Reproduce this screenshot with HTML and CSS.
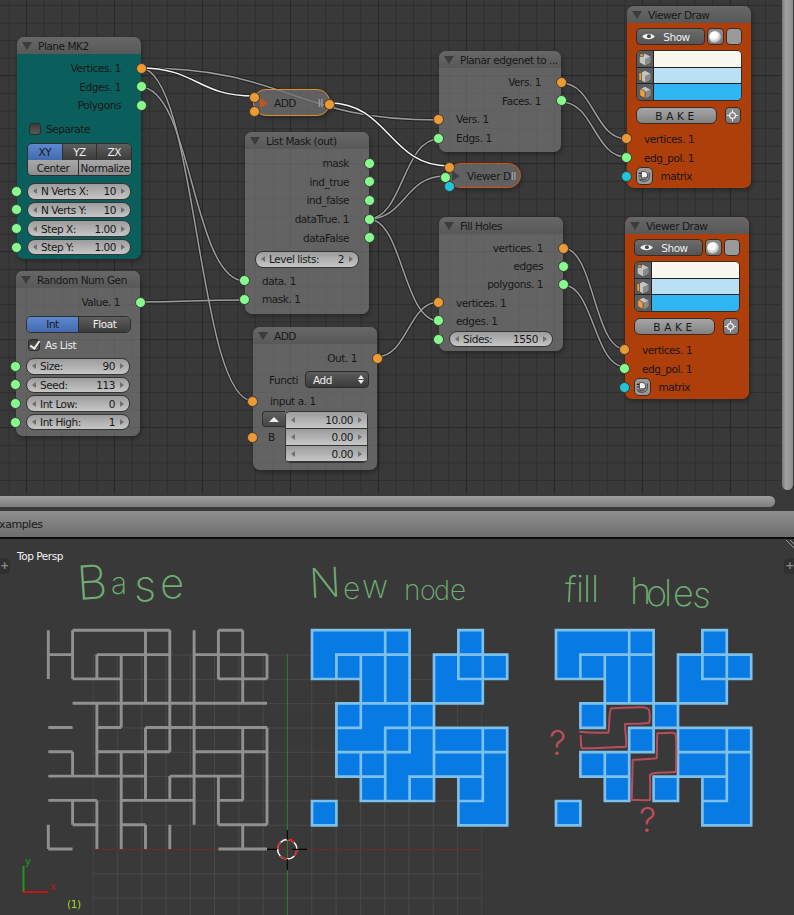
FILE: index.html
```html
<!DOCTYPE html>
<html lang="en">
<head>
    <meta charset="UTF-8">
    <title>Sverchok node tree</title>
    <link rel="stylesheet" href="styles.css">
</head>
<body>

    <svg class="defs" width="0" height="0">
        <symbol id="cube1" viewBox="0 0 16 16">
            <path d="M8 2 14 5V12L8 15 2 12V5Z" fill="#c4c4c4"/>
            <path d="M8 8 14 5V12L8 15Z" fill="#8a8a8a"/>
            <path d="M2 2H6V5H2Z" fill="#f0a040" stroke="#222" stroke-width=".6"/>
        </symbol>
        <symbol id="cube2" viewBox="0 0 16 16">
            <path d="M8 2 14 5V12L8 15 2 12V5Z" fill="#c4c4c4"/>
            <path d="M8 8 14 5V12L8 15Z" fill="#8a8a8a"/>
            <path d="M1 4H4V13H1Z" fill="#f0a040" stroke="#222" stroke-width=".6"/>
        </symbol>
        <symbol id="cube3" viewBox="0 0 16 16">
            <path d="M8 2 14 5V12L8 15 2 12V5Z" fill="#c4c4c4"/>
            <path d="M8 8 14 5V12L8 15Z" fill="#8a8a8a"/>
            <path d="M2 4 8 7V15L2 12Z" fill="#f0a040" stroke="#222" stroke-width=".6"/>
        </symbol>
        <symbol id="plug" viewBox="0 0 16 16">
            <path d="M3 13C8 15 14 14 14 9V4" fill="none" stroke="#333" stroke-width="1"/>
            <path d="M2 11C7 13 12 12 12 8" fill="none" stroke="#333" stroke-width="1"/>
            <path d="M5 3H9C11 3 12 5 12 7S11 10 9 10H5Z" fill="#f2f2f2" stroke="#222" stroke-width=".8"/>
            <path d="M2 5H5M2 8H5" stroke="#222" stroke-width="1.2"/>
        </symbol>
        <symbol id="eye" viewBox="0 0 16 10">
            <path d="M1 5C4 1 12 1 15 5 12 9 4 9 1 5Z" fill="#f0f0f0"/>
            <circle cx="8.5" cy="4.6" r="2.2" fill="#444"/>
        </symbol>
        <symbol id="target" viewBox="0 0 16 16">
            <circle cx="8" cy="8" r="3.6" fill="none" stroke="#eee" stroke-width="1.6"/>
            <path d="M8 1V4M8 12V15M1 8H4M12 8H15" stroke="#eee" stroke-width="1.4"/>
        </symbol>
    </svg>

    <div class="editor">
        <div class="grid">

            <svg class="wires" width="781" height="494">
                <defs>
                    <g id="links">
                        <path d="M140 68C290 68 290 120 439 120"/>
                        <path d="M140 68C197 68 197 401 253 401"/>
                        <path d="M140 87C192 87 192 281 245 281"/>
                        <path d="M139 302C190 302 190 300 245 300"/>
                        <path d="M368 219C403 219 403 139 439 139"/>
                        <path d="M368 219C405 219 405 176 445 176"/>
                        <path d="M368 219C403 219 403 321 439 321"/>
                        <path d="M376 357C408 357 408 302 439 302"/>
                        <path d="M561 83C594 83 594 139 627 139"/>
                        <path d="M561 102C594 102 594 157 627 157"/>
                        <path d="M563 248C594 248 594 349 625 349"/>
                        <path d="M563 285C594 285 594 367 625 367"/>
                    </g>
                    <g id="active">
                        <path d="M140 68C197 68 197 96 254 96"/>
                        <path d="M329 103C389 103 389 166 449 166"/>
                    </g>
                </defs>
                <use href="#links" class="wire-back"/>
                <use href="#links" class="wire-line"/>
                <use href="#active" class="wire-back"/>
                <use href="#active" class="wire-on"/>
            </svg>

            <div class="node plane">
                <div class="node-head"><i class="fold"></i>Plane MK2</div>
                <div class="row out">Vertices. 1<i class="sock out orange"></i></div>
                <div class="row out">Edges. 1<i class="sock out green"></i></div>
                <div class="row out">Polygons<i class="sock out green"></i></div>
                <div class="row check-row mt5"><i class="check"></i>Separate</div>
                <div class="btn-group mt5">
                    <div class="btn-line">
                        <span class="btn blue">XY</span><span class="btn dark">YZ</span><span class="btn dark">ZX</span>
                    </div>
                    <div class="btn-line">
                        <span class="btn grey wide">Center</span><span class="btn grey wider">Normalize</span>
                    </div>
                </div>
                <div class="row field-row mt6"><i class="sock in green"></i><div class="field"><span>N Verts X:</span><b>10</b></div></div>
                <div class="row field-row"><i class="sock in green"></i><div class="field"><span>N Verts Y:</span><b>10</b></div></div>
                <div class="row field-row"><i class="sock in green"></i><div class="field"><span>Step X:</span><b>1.00</b></div></div>
                <div class="row field-row"><i class="sock in green"></i><div class="field"><span>Step Y:</span><b>1.00</b></div></div>
            </div>

            <div class="node random">
                <div class="node-head"><i class="fold"></i>Random Num Gen</div>
                <div class="row out">Value. 1<i class="sock out green"></i></div>
                <div class="btn-group mt4">
                    <div class="btn-line">
                        <span class="btn blue half">Int</span><span class="btn dark half">Float</span>
                    </div>
                </div>
                <div class="row check-row mt3"><i class="check on"></i><span class="light">As List</span></div>
                <div class="row field-row mt2"><i class="sock in green"></i><div class="field"><span>Size:</span><b>90</b></div></div>
                <div class="row field-row"><i class="sock in green"></i><div class="field"><span>Seed:</span><b>113</b></div></div>
                <div class="row field-row"><i class="sock in green"></i><div class="field"><span>Int Low:</span><b>0</b></div></div>
                <div class="row field-row"><i class="sock in green"></i><div class="field"><span>Int High:</span><b>1</b></div></div>
            </div>

            <div class="node mask">
                <div class="node-head"><i class="fold"></i>List Mask (out)</div>
                <div class="row out">mask<i class="sock out green"></i></div>
                <div class="row out">ind_true<i class="sock out green"></i></div>
                <div class="row out">ind_false<i class="sock out green"></i></div>
                <div class="row out">dataTrue. 1<i class="sock out green"></i></div>
                <div class="row out">dataFalse<i class="sock out green"></i></div>
                <div class="row field-row mt3"><div class="field"><span>Level lists:</span><b>2</b></div></div>
                <div class="row mt3"><i class="sock in green"></i>data. 1</div>
                <div class="row"><i class="sock in green"></i>mask. 1</div>
            </div>

            <div class="node planar">
                <div class="node-head"><i class="fold"></i>Planar edgenet to ...</div>
                <div class="row out">Vers. 1<i class="sock out orange"></i></div>
                <div class="row out">Faces. 1<i class="sock out green"></i></div>
                <div class="row"><i class="sock in orange"></i>Vers. 1</div>
                <div class="row"><i class="sock in green"></i>Edgs. 1</div>
            </div>

            <div class="node holes tight">
                <div class="node-head"><i class="fold"></i>Fill Holes</div>
                <div class="row out">vertices. 1<i class="sock out orange"></i></div>
                <div class="row out">edges<i class="sock out green"></i></div>
                <div class="row out">polygons. 1<i class="sock out green"></i></div>
                <div class="row"><i class="sock in orange"></i>vertices. 1</div>
                <div class="row"><i class="sock in green"></i>edges. 1</div>
                <div class="row field-row"><i class="sock in green"></i><div class="field"><span>Sides:</span><b>1550</b></div></div>
            </div>

            <div class="node add">
                <div class="node-head"><i class="fold"></i>ADD</div>
                <div class="row out">Out. 1<i class="sock out orange"></i></div>
                <div class="row func mt3">
                    <span>Functi</span>
                    <div class="select">Add<i class="updown"></i></div>
                </div>
                <div class="row mt3"><i class="sock in orange"></i>input a. 1</div>
                <div class="vec">
                    <div class="vec-side">
                        <span class="vec-up"><i></i></span>
                        <span class="vec-b"><i class="sock in orange"></i>B</span>
                    </div>
                    <div class="vec-fields">
                        <div class="field flat"><b>10.00</b></div>
                        <div class="field flat"><b>0.00</b></div>
                        <div class="field flat"><b>0.00</b></div>
                    </div>
                </div>
            </div>

            <div class="node draw draw-a">
                <div class="node-head"><i class="fold"></i>Viewer Draw</div>
                <div class="show-line">
                    <span class="show"><svg class="eye" width="15" height="9"><use href="#eye"/></svg>Show</span>
                    <span class="icon-btn"><i class="sphere"></i></span>
                    <span class="icon-btn plain"></span>
                </div>
                <div class="swatches">
                    <div class="swatch"><span class="swatch-icon"><svg width="14" height="14"><use href="#cube1"/></svg></span><i class="white"></i></div>
                    <div class="swatch"><span class="swatch-icon"><svg width="14" height="14"><use href="#cube2"/></svg></span><i class="pale"></i></div>
                    <div class="swatch"><span class="swatch-icon"><svg width="14" height="14"><use href="#cube3"/></svg></span><i class="sky"></i></div>
                </div>
                <div class="bake-line">
                    <span class="bake">BAKE</span>
                    <span class="icon-btn"><svg width="13" height="13"><use href="#target"/></svg></span>
                </div>
                <div class="row mt6"><i class="sock in orange"></i>vertices. 1</div>
                <div class="row"><i class="sock in green"></i>edg_pol. 1</div>
                <div class="row matrix"><i class="sock in teal"></i><span class="plug"><svg width="14" height="14"><use href="#plug"/></svg></span>matrix</div>
            </div>

            <div class="node draw draw-b">
                <div class="node-head"><i class="fold"></i>Viewer Draw</div>
                <div class="show-line">
                    <span class="show"><svg class="eye" width="15" height="9"><use href="#eye"/></svg>Show</span>
                    <span class="icon-btn"><i class="sphere"></i></span>
                    <span class="icon-btn plain"></span>
                </div>
                <div class="swatches">
                    <div class="swatch"><span class="swatch-icon"><svg width="14" height="14"><use href="#cube1"/></svg></span><i class="white"></i></div>
                    <div class="swatch"><span class="swatch-icon"><svg width="14" height="14"><use href="#cube2"/></svg></span><i class="pale"></i></div>
                    <div class="swatch"><span class="swatch-icon"><svg width="14" height="14"><use href="#cube3"/></svg></span><i class="sky"></i></div>
                </div>
                <div class="bake-line">
                    <span class="bake">BAKE</span>
                    <span class="icon-btn"><svg width="13" height="13"><use href="#target"/></svg></span>
                </div>
                <div class="row mt6"><i class="sock in orange"></i>vertices. 1</div>
                <div class="row"><i class="sock in green"></i>edg_pol. 1</div>
                <div class="row matrix"><i class="sock in teal"></i><span class="plug"><svg width="14" height="14"><use href="#plug"/></svg></span>matrix</div>
            </div>

            <!-- collapsed nodes -->
            <div class="pill pill-add">
                <i class="sock orange s1"></i><i class="sock orange s2"></i><i class="sock orange s3"></i>
                <i class="play"></i><span>ADD</span><em>II</em>
            </div>
            <div class="pill pill-viewer">
                <i class="sock orange s1"></i><i class="sock green s2"></i><i class="sock teal s3"></i>
                <i class="play"></i><span>Viewer D</span><em>II</em>
            </div>
        </div>
        <div class="vscroll"></div>
        <div class="hscroll"></div>
    </div>

    <div class="area-head"><span>examples</span></div>

    <div class="viewport">
        <i class="tab tab-l">+</i>
        <i class="tab tab-r">+</i>
        <svg class="view" width="794" height="376" viewBox="0 539 794 376">
            <defs>
                <pattern id="floor" x="92.6" y="654.6" width="24.3" height="24.3" patternUnits="userSpaceOnUse">
                    <path d="M0 0V24.3M0 0H24.3" stroke="#484848" stroke-width="2" fill="none"/>
                </pattern>
            </defs>
            <rect x="92.6" y="654" width="389.5" height="261" fill="url(#floor)"/>
            <path d="M93 849.3H482" stroke="#6c2a2a" stroke-width="1"/>
            <path d="M287.3 654V915" stroke="#2f7f2f" stroke-width="1"/>

            <g class="hatch">
                <path d="M786 540 794 548M790 540 794 544"/>
            </g>

            <text class="view-label" x="17" y="560">Top Persp</text>

            <!-- handwritten notes -->
            <text class="note">
                <tspan x="78" y="600" font-size="47" rotate="-4">B</tspan>
                <tspan x="111" y="594" font-size="30">a</tspan>
                <tspan x="134" y="601" font-size="44">s</tspan>
                <tspan x="160" y="598" font-size="42">e</tspan>
            </text>
            <text class="note">
                <tspan x="310" y="598" font-size="41" rotate="-3">N</tspan>
                <tspan x="343" y="599" font-size="30">e</tspan>
                <tspan x="362" y="598" font-size="32">w</tspan>
                <tspan x="404" y="600" font-size="28">n</tspan>
                <tspan x="420" y="600" font-size="27">o</tspan>
                <tspan x="434" y="600" font-size="27">d</tspan>
                <tspan x="450" y="600" font-size="28">e</tspan>
            </text>
            <text class="note" font-size="36" x="564 576 583 591 630 646 664 673 692" y="602 602 602 602 604 606 606 606 607" rotate="3 0 0 0 0 0 0 0 4">fillholes</text>

            <!-- base grid, free edges included -->
            <path class="base" transform="translate(48.3 630.3) scale(24.3)" d="M1 0H5M7 0H8M0 1H1M2 1H5M6 1H9M1 2H3M7 2H9M1 3H9M0 4H1M2 4H3M4 4H9M0 5H1M2 5H5M6 5H9M0 6H4M5 6H8M0 7H2M3 7H6M7 7H8M1 8H2M3 8H4M7 8H9M0 9H1M7 9H9M0 0V2M0 8V9M1 0V2M1 5V6M1 7V8M2 1V2M2 3V6M2 7V9M3 1V4M3 5V9M4 0V3M4 4V7M4 8V9M5 0V5M5 6V7M5 8V9M6 0V8M7 0V2M7 6V8M8 0V3M8 4V7M8 8V9M9 1V2M9 4V8"/>

            <!-- planar faces -->
            <g transform="translate(312 630.2) scale(24.4)">
                <path class="face" d="M0 0H4V1H0ZM6 0H7V1H6ZM0 1H4V2H0ZM5 1H8V2H5ZM2 2H4V3H2ZM5 2H7V3H5ZM1 3H5V4H1ZM1 4H8V5H1ZM1 5H8V6H1ZM2 6H5V7H2ZM6 6H8V7H6ZM0 7H1V8H0ZM6 7H8V8H6Z"/>
                <path class="edge" d="M0 0H4M6 0H7M1 1H4M5 1H8M0 2H2M6 2H8M1 3H7M1 4H2M3 4H8M1 5H4M5 5H8M1 6H3M4 6H7M2 7H5M6 7H7M0 7H1M0 8H1M6 8H8M0 0V2M0 7V8M1 1V2M1 3V6M1 7V8M2 1V4M2 5V7M3 0V3M3 4V7M4 0V5M4 6V7M5 1V7M6 0V2M6 6V8M7 0V3M7 4V7M8 1V2M8 4V8"/>
            </g>

            <!-- filled holes -->
            <g transform="translate(556 630.2) scale(24.4)">
                <path class="face" d="M0 0H4V1H0ZM6 0H7V1H6ZM0 1H4V2H0ZM5 1H8V2H5ZM2 2H4V3H2ZM5 2H7V3H5ZM1 3H2V4H1ZM4 3H5V4H4ZM3 4H4V5H3ZM5 4H8V5H5ZM1 5H3V6H1ZM5 5H8V6H5ZM2 6H3V7H2ZM4 6H5V7H4ZM6 6H8V7H6ZM0 7H1V8H0ZM6 7H8V8H6Z"/>
                <path class="edge" d="M0 0H4M6 0H7M1 1H4M5 1H8M0 2H2M6 2H8M1 3H7M1 4H2M3 4H8M1 5H4M5 5H8M1 6H3M4 6H7M2 7H3M4 7H5M6 7H7M0 7H1M0 8H1M6 8H8M0 0V2M0 7V8M1 1V2M1 3V4M1 5V6M1 7V8M2 1V4M2 5V7M3 0V3M3 4V7M4 0V5M4 6V7M5 1V7M6 0V2M6 6V8M7 0V3M7 4V7M8 1V2M8 4V8"/>
            </g>

            <!-- red marks -->
            <path class="mark" d="M579.3 731.7C590 733 600 733 608.3 732.7 609.5 728 609 724 609.3 720 609.5 715 610 711 611 708.3 622 708 633 707 643.3 707.3 647 708 649 709 649.3 710.7 650 715 650 719 649.3 722.7 641 724 633 723.5 625 724 625 732 627 740 626 746.7 611 747.5 596 748.5 581.7 748.3 580.5 744 581 739 580.7 735"/>
            <path class="mark" d="M657.3 733.3C662 733 668 732.5 673.3 732.7 675 733 676 735 676 736.7 676.5 748 676 760 676 771.7 668 773 660 772 653.3 773.3 651 774 650 775 650 775 650 783 650.5 792 650 800 644 800.5 638 800 631.7 800 632 787 632.5 773 632.7 760 640 759 649 759.5 656.7 758.3 657 750 657 742 657.3 733.3Z"/>
            <text class="qmark" x="549" y="755">?</text>
            <text class="qmark" x="639" y="832">?</text>

            <!-- 3d cursor -->
            <circle class="cur-w" cx="287.3" cy="849.3" r="9.7"/>
            <circle class="cur-r" cx="287.3" cy="849.3" r="9.7"/>
            <path class="cur-x" d="M267 849.3H277M292 849.3H307M287.3 830V840M287.3 859V870"/>

            <!-- axis widget -->
            <path d="M23.5 892V866" stroke="#1c9a1c" stroke-width="2"/>
            <path d="M22.5 892H48" stroke="#c01818" stroke-width="2"/>
            <text class="axis-y" x="25" y="865">y</text>
            <text class="axis-x" x="50" y="890">x</text>
            <text class="frame" x="67" y="908">(1)</text>
        </svg>
    </div>

</body>
</html>
```

FILE: styles.css
```css
html, body {
    margin: 0;
    padding: 0;
}

body {
    width: 794px;
    height: 915px;
    overflow: hidden;
    background-color: #393939;
    font-family: "DejaVu Sans", sans-serif;
    font-size: 10.5px;
    letter-spacing: -0.45px;
    color: #181818;
}

.defs {
    display: block;
    height: 0;
}

/* node editor */
.editor {
    display: grid;
    grid-template-columns: 781px 13px;
    grid-template-rows: 494px 14px;
    height: 508px;
    background-color: #393939;
}

.grid {
    position: relative;
    overflow: hidden;
    background-color: #393939;
    background-image:
        linear-gradient(to right, #282828 1px, transparent 1px),
        linear-gradient(to bottom, #282828 1px, transparent 1px),
        linear-gradient(to right, #2e2e2e 1px, transparent 1px),
        linear-gradient(to bottom, #2e2e2e 1px, transparent 1px);
    background-size: 88px 88px, 88px 88px, 17.6px 17.6px, 17.6px 17.6px;
    background-position: 26px 75px, 26px 75px, 8.5px 5px, 8.5px 5px;
}

.vscroll {
    width: 11px;
    height: 490px;
    margin-left: 1px;
    background: linear-gradient(to right, #777, #a2a2a2 35%, #8c8c8c);
    border-radius: 0 0 6px 6px;
}

.hscroll {
    width: 775px;
    height: 11px;
    margin-top: 2px;
    background: linear-gradient(to bottom, #a0a0a0, #7e7e7e);
    border-radius: 0 6px 6px 0;
}

.wires {
    position: absolute;
    left: 0;
    top: 0;
}

.wires path {
    fill: none;
}

.wire-back {
    stroke: #232323;
    stroke-width: 3.6;
}

.wire-line {
    stroke: #9c9c9c;
    stroke-width: 1.5;
}

.wire-on {
    stroke: #f4f4f4;
    stroke-width: 1.5;
}

.node {
    position: absolute;
    box-sizing: border-box;
    display: flex;
    flex-direction: column;
    width: 124px;
    padding-bottom: 3px;
    border-radius: 7px;
    background-color: rgba(120, 120, 120, 0.68);
    box-shadow: 1px 2px 5px rgba(0, 0, 0, 0.35);
}

.node-head {
    display: flex;
    align-items: center;
    height: 17px;
    margin-bottom: 5px;
    padding-left: 21px;
    position: relative;
    border-radius: 7px 7px 0 0;
    background: linear-gradient(to bottom, #676767, #585858);
    white-space: nowrap;
}

.fold {
    position: absolute;
    left: 5px;
    top: 5px;
    width: 0;
    height: 0;
    border-left: 5px solid transparent;
    border-right: 5px solid transparent;
    border-top: 8px solid #3c3c3c;
}

.plane { left: 17px; top: 37px; background-color: #0a5f5d; }
.random { left: 16px; top: 271px; padding-bottom: 4.5px; }
.mask { left: 245px; top: 132px; padding-bottom: 5px; }
.planar { left: 439px; top: 51px; width: 122px; padding-bottom: 5px; }
.holes { left: 439px; top: 217px; }
.add { left: 253px; top: 327px; padding-bottom: 7px; }
.draw { background-color: #ae3e0a; }
.draw-a { left: 627px; top: 6px; }
.draw-b { left: 625px; top: 217px; }

.row {
    position: relative;
    display: flex;
    align-items: center;
    height: 18.6px;
    padding: 0 20px 0 17px;
    white-space: nowrap;
}

.tight .row {
    height: 18.2px;
}

.row.out {
    justify-content: flex-end;
}

.field-row {
    padding: 0 10px;
}

/* sockets */
.sock {
    position: absolute;
    top: 50%;
    box-sizing: border-box;
    width: 11px;
    height: 11px;
    margin-top: -5.5px;
    border-radius: 50%;
    border: 1px solid #3a3a3a;
}

.sock.in { left: -6px; }
.sock.out { right: -6px; }
.orange { background-color: #ee9a33; }
.green { background-color: #86fb8e; }
.teal { background-color: #1fc6d6; }

/* widgets */
.field {
    box-sizing: border-box;
    display: flex;
    align-items: center;
    width: 100%;
    height: 16.5px;
    padding: 0 5px;
    border: 1px solid #353535;
    border-radius: 8px;
    background: linear-gradient(to bottom, #9c9c9c, #c6c6c6);
}

.field::before {
    content: "";
    border-top: 3px solid transparent;
    border-bottom: 3px solid transparent;
    border-right: 4px solid #6f6f6f;
    margin-right: 4px;
}

.field::after {
    content: "";
    border-top: 3px solid transparent;
    border-bottom: 3px solid transparent;
    border-left: 4px solid #6f6f6f;
    margin-left: 5px;
}

.field b {
    margin-left: auto;
    font-weight: normal;
}

.field.flat {
    height: 16.7px;
    border-radius: 0;
    border-width: 0 1px 1px 1px;
}

.btn-group {
    display: flex;
    flex-direction: column;
    margin: 0 9px 0 10px;
    border: 1px solid #2e2e2e;
    border-radius: 5px;
    overflow: hidden;
}

.btn-line {
    display: flex;
}

.btn {
    display: flex;
    align-items: center;
    justify-content: center;
    flex: 1;
    height: 15.5px;
    border-right: 1px solid #2e2e2e;
}

.btn:last-child {
    border-right: none;
}

.btn.blue {
    background: linear-gradient(to bottom, #5e88d0, #436aad);
}

.btn.dark {
    background: linear-gradient(to bottom, #5e5e5e, #3b3b3b);
    color: #f0f0f0;
}

.btn.grey {
    background: linear-gradient(to bottom, #a8a8a8, #8e8e8e);
}

.btn.wide { flex: 51; }
.btn.wider { flex: 53; }
.btn.half { flex: 1; }

.check-row {
    padding-left: 12px;
    gap: 5px;
}

.check {
    position: relative;
    box-sizing: border-box;
    width: 12px;
    height: 12px;
    border: 1px solid #2c2c2c;
    border-radius: 3px;
    background: linear-gradient(to bottom, #3b3b3b, #5a5a5a);
}

.check.on::after {
    content: "";
    position: absolute;
    left: 3px;
    top: -1px;
    width: 4px;
    height: 8px;
    border-right: 2px solid #eee;
    border-bottom: 2px solid #eee;
    transform: rotate(35deg);
}

.light {
    color: #ededed;
}

.func {
    padding: 0 8px 0 16px;
    justify-content: space-between;
}

.select {
    position: relative;
    box-sizing: border-box;
    display: flex;
    align-items: center;
    width: 64px;
    height: 17px;
    padding-left: 7px;
    border: 1px solid #2c2c2c;
    border-radius: 4px;
    background: linear-gradient(to bottom, #5c5c5c, #3a3a3a);
    color: #ececec;
}

.updown {
    position: absolute;
    right: 4px;
    top: 3px;
    width: 0;
    height: 0;
    border-left: 3px solid transparent;
    border-right: 3px solid transparent;
    border-bottom: 4px solid #eee;
}

.updown::after {
    content: "";
    position: absolute;
    left: -3px;
    top: 5px;
    border-left: 3px solid transparent;
    border-right: 3px solid transparent;
    border-top: 4px solid #eee;
}

.vec {
    display: grid;
    grid-template-columns: 23px 1fr;
    margin: 0.5px 9px 0;
}

.vec-fields {
    border-top: 1px solid #353535;
    border-radius: 6px;
    overflow: hidden;
    border-bottom: 1px solid #353535;
}

.vec-side {
    display: flex;
    flex-direction: column;
}

.vec-up {
    display: flex;
    align-items: center;
    justify-content: center;
    box-sizing: border-box;
    height: 16px;
    border: 1px solid #2e2e2e;
    border-right: none;
    border-radius: 4px 0 0 4px;
    background: linear-gradient(to bottom, #5f5f5f, #474747);
}

.vec-up i {
    width: 0;
    height: 0;
    border-left: 5px solid transparent;
    border-right: 5px solid transparent;
    border-bottom: 5px solid #eee;
}

.vec-b {
    position: relative;
    height: 18px;
    padding: 3px 0 0 6px;
    box-sizing: border-box;
    margin-top: 1px;
}

.vec-b .sock {
    left: -15px;
}

/* viewer draw */
.show-line {
    display: flex;
    gap: 2px;
    height: 17px;
    margin: 0 9px;
}

.show {
    position: relative;
    box-sizing: border-box;
    display: flex;
    align-items: center;
    justify-content: center;
    width: 69px;
    padding-left: 12px;
    border: 1px solid #3a2a20;
    border-radius: 4px;
    background: linear-gradient(to bottom, #6c6c6c, #555);
    color: #f0f0f0;
}

.eye {
    position: absolute;
    left: 4px;
    top: 3px;
}

.icon-btn {
    box-sizing: border-box;
    display: flex;
    align-items: center;
    justify-content: center;
    width: 16.5px;
    height: 17px;
    border: 1px solid #3a2a20;
    border-radius: 4px;
    background: linear-gradient(to bottom, #8c8c8c, #7a7a7a);
}

.icon-btn.plain {
    background: #9a9a9a;
}

.sphere {
    width: 12px;
    height: 12px;
    border-radius: 50%;
    background: radial-gradient(circle at 40% 35%, #fff 30%, #c8c8c8 60%, #444);
}

.swatches {
    display: flex;
    flex-direction: column;
    margin: 5px 9px 0;
    height: 51px;
    border-radius: 5px;
    overflow: hidden;
    border: 1px solid #3a2a20;
    box-sizing: border-box;
}

.swatch {
    display: flex;
    flex: 1;
    border-bottom: 1px solid #222;
}

.swatch:last-child {
    border-bottom: none;
}

.swatch-icon {
    display: flex;
    align-items: center;
    justify-content: center;
    width: 16px;
    border-right: 1px solid #222;
    background-color: #5c5c5c;
}

.swatch i {
    flex: 1;
}

.white { background-color: #f8f8f1; }
.pale { background-color: #b9e0f3; }
.sky { background-color: #2eb5f2; }

.bake-line {
    display: flex;
    justify-content: space-between;
    margin: 6px 10px 0 9px;
}

.bake {
    box-sizing: border-box;
    display: flex;
    align-items: center;
    justify-content: center;
    width: 81px;
    height: 17px;
    border: 1px solid #3a2a20;
    border-radius: 6px;
    background: linear-gradient(to bottom, #a6a6a6, #828282);
    letter-spacing: 3.6px;
}

.matrix {
    gap: 8px;
    padding-left: 9px;
}

.plug {
    box-sizing: border-box;
    display: flex;
    align-items: center;
    justify-content: center;
    width: 16.5px;
    height: 18px;
    border: 1px solid #3a2a20;
    border-radius: 5px;
    background-color: #999;
}

/* collapsed nodes */
.pill {
    position: absolute;
    box-sizing: border-box;
    display: flex;
    align-items: center;
    border-radius: 13px;
    background-color: rgba(112, 112, 112, 0.72);
    box-shadow: 1px 2px 5px rgba(0, 0, 0, 0.35);
}

.pill span {
    white-space: nowrap;
}

.pill em {
    font-style: normal;
    color: #a8a8a8;
    position: absolute;
}

.play {
    width: 0;
    height: 0;
    border-top: 5px solid transparent;
    border-bottom: 5px solid transparent;
    border-left: 8px solid #404040;
}

.pill-add {
    left: 253px;
    top: 89px;
    width: 77px;
    height: 27px;
    padding-left: 6px;
    border: 1px solid #d98f30;
}

.pill-add .play {
    border-left-color: #c0561a;
    margin-right: 6px;
}

.pill-add em { right: 6px; }
.pill-add .s1 { left: -5px; top: 7px; }
.pill-add .s2 { left: -5px; top: 21px; }
.pill-add .s3 { right: -6px; top: 14px; }

.pill-viewer {
    left: 448px;
    top: 163px;
    width: 73px;
    height: 25px;
    padding-left: 3px;
    border: 1px solid #dd4f10;
}

.pill-viewer .play { margin-right: 7px; }
.pill-viewer em { right: 4px; }
.pill-viewer .s1 { left: -5px; top: 3px; }
.pill-viewer .s2 { left: -9px; top: 13px; }
.pill-viewer .s3 { left: -5px; top: 22px; }

/* info strip */
.area-head {
    box-sizing: border-box;
    height: 28px;
    margin-top: 3px;
    display: flex;
    align-items: center;
    border-bottom: 2px solid #0c0c0c;
    background: linear-gradient(to bottom, #8e8e8e, #6e6e6e);
    font-size: 11px;
    overflow: hidden;
}

.area-head span {
    margin-left: -7px;
}

/* 3d view */
.viewport {
    position: relative;
    height: 376px;
    background-color: #393939;
}

.view {
    display: block;
}

.tab {
    position: absolute;
    top: 19px;
    width: 10px;
    height: 16px;
    z-index: 1;
    background-color: #303030;
    color: #8a8a8a;
    font-style: normal;
    font-weight: bold;
    font-size: 11px;
    line-height: 15px;
}

.tab-l { left: 0; border-radius: 0 4px 4px 0; text-align: left; }
.tab-r { right: 0; border-radius: 4px 0 0 4px; text-align: right; }

.hatch path {
    fill: none;
    stroke: #9a9a9a;
    stroke-width: 1;
}

.view-label {
    fill: #f2f2f2;
    font-size: 10.5px;
}

.note {
    fill: #6fae72;
    font-family: "Inter", "Liberation Sans", sans-serif;
    font-weight: 200;
    letter-spacing: 0;
}

.base {
    fill: none;
    stroke: #909090;
    stroke-width: 0.12;
}

.face {
    fill: #077ae4;
}

.edge {
    fill: none;
    stroke: #7dc1ea;
    stroke-width: 0.11;
    stroke-linecap: square;
}

.mark {
    fill: none;
    stroke: #b84e5c;
    stroke-width: 2;
    stroke-linejoin: round;
}

.qmark {
    fill: #bc4e5c;
    font-family: "Inter", "Liberation Sans", sans-serif;
    font-weight: 300;
    font-size: 34px;
}

.cur-w {
    fill: none;
    stroke: #fff;
    stroke-width: 1.5;
}

.cur-r {
    fill: none;
    stroke: #e01010;
    stroke-width: 1.5;
    stroke-dasharray: 7.6 7.6;
}

.cur-x {
    stroke: #000;
    stroke-width: 1.2;
}

.axis-y { fill: #1c9a1c; font-size: 10px; }
.axis-x { fill: #c01818; font-size: 10px; }
.frame { fill: #a6d81e; font-size: 10.5px; }

.mt2 { margin-top: 2.4px; }
.mt3 { margin-top: 3px; }
.mt4 { margin-top: 4px; }
.mt5 { margin-top: 5px; }
.mt6 { margin-top: 5.7px; }
```
